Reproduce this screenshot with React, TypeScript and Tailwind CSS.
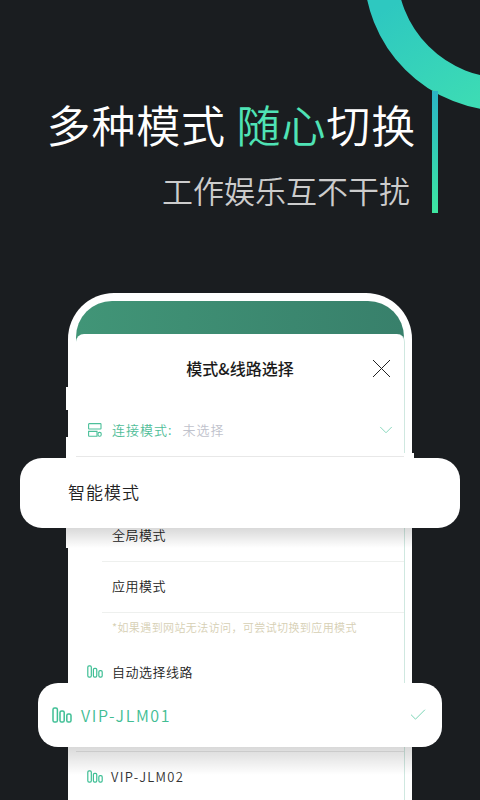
import { Check, ChevronDown } from 'lucide-react';

const font = "font-['Noto_Sans_CJK_SC','Noto_Sans',sans-serif]";

function LineIcon({ className }: { className: string }) {
  return (
    <svg viewBox="0 0 20 16" fill="none" stroke="currentColor" strokeWidth="1.5" className={className}>
      <rect x="1" y="1" width="4.4" height="14" rx="1.6" />
      <rect x="8" y="4" width="4.2" height="11" rx="1.6" />
      <rect x="14.8" y="7" width="4.2" height="8" rx="1.6" />
    </svg>
  );
}

function ModeIcon() {
  return (
    <svg viewBox="0 0 14 14" fill="none" stroke="currentColor" strokeWidth="1.1" className="h-[14px] w-[14px] text-[#4cc09a]">
      <rect x="0.6" y="0.6" width="12.4" height="5.4" rx="0.6" />
      <path d="M9 13.2H1.2a.6.6 0 0 1-.6-.6V8.4h8.4z" />
      <rect x="10" y="9.4" width="3.2" height="3.8" rx="1.4" />
    </svg>
  );
}

export default function App() {
  return (
    <div className={`relative h-[800px] w-[480px] overflow-hidden bg-[#1a1d20] ${font}`}>
      {/* corner ring */}
      <svg viewBox="0 0 480 120" className="absolute top-0 left-0 h-[120px] w-[480px]">
        <defs>
          <linearGradient id="ring" gradientUnits="userSpaceOnUse" x1="400" y1="0" x2="470" y2="110">
            <stop offset="0" stopColor="#2ec8c0" />
            <stop offset="1" stopColor="#3ddcb4" />
          </linearGradient>
        </defs>
        <circle cx="505" cy="-30" r="124.5" fill="none" stroke="url(#ring)" strokeWidth="33" />
      </svg>

      {/* heading */}
      <div className="relative flex justify-end pt-[91px] pr-[42px]">
        <div className="flex flex-col items-end">
          <h1 className="mt-[-2px] mr-[-1px] h-[70px] text-[44px] leading-[70px] font-[350] tracking-[0.85px] whitespace-pre text-white">
            多种模式 <span className="text-[#4fe3b5]">随心</span>切换
          </h1>
          <p className="mt-[8px] mr-[5px] text-[31px] leading-[46px] font-[350] text-[#cccccc]">工作娱乐互不干扰</p>
        </div>
        <div className="ml-[17px] h-[122px] w-[6px] bg-gradient-to-b from-[#2bb4c4] to-[#3ee6a0]" />
      </div>

      {/* phone */}
      <div className="mx-[68px] mt-[80px] h-[520px] rounded-t-[46px] bg-white px-[8px] pt-[8px]">
        <div className="h-[50px] rounded-t-[36px] bg-gradient-to-r from-[#419577] to-[#38806b]" />
        <div className="relative mt-[-17px] mr-[-1px] h-[470px] rounded-t-[8px] border-r border-[#cfe8e0] bg-white">
          <div className="flex h-[70px] items-center justify-center pb-[2px]">
            <span className="text-[16px] font-medium text-[#1b1b1b]">模式&amp;线路选择</span>
            <svg viewBox="0 0 19 19" fill="none" stroke="#222" strokeWidth="1" className="absolute top-[25px] right-[13px] h-[19px] w-[19px]">
              <path d="M1 1l17 17M18 1L1 18" />
            </svg>
          </div>
          <div className="flex h-[53px] items-center border-b border-[#e8e8e8] pr-[7px] pl-[12px] text-[13px] font-[350]">
            <ModeIcon />
            <span className="ml-[10px] tracking-[1px] text-[#4fbd98]">连接模式:</span>
            <span className="ml-[10px] tracking-[1px] text-[#c0c2cc]">未选择</span>
            <ChevronDown className="ml-auto h-[22px] w-[22px] text-[#7fd4b8]" strokeWidth={1} />
          </div>

          <div className="mt-[54px] ml-[26px] flex h-[51px] items-center border-b border-[#eef0ee] pb-[2px] pl-[10px] text-[13px] font-[350] tracking-[0.5px] text-[#222]">全局模式</div>
          <div className="ml-[26px] flex h-[51px] items-center border-b border-[#eef0ee] pb-[2px] pl-[10px] text-[13px] font-[350] tracking-[0.5px] text-[#222]">应用模式</div>
          <p className="mt-[5px] ml-[36px] text-[11px] leading-[18px] font-[350] tracking-[0.4px] text-[#d6cfb4]">*如果遇到网站无法访问，可尝试切换到应用模式</p>

          <div className="mt-[26px] flex items-center pl-[11px] text-[13px] font-[350] text-[#222]">
            <LineIcon className="h-[13px] w-[16px] text-[#3fbf95]" />
            <span className="ml-[9px] tracking-[0.5px]">自动选择线路</span>
          </div>

          <div className="mt-[69px] border-t border-[#e8e8e8] pt-[15px]">
            <div className="flex items-center pl-[11px] text-[13px] font-[350] text-[#333]">
              <LineIcon className="h-[13px] w-[16px] text-[#3fbf95]" />
              <span className="ml-[8px] tracking-[1.3px]">VIP-JLM02</span>
            </div>
          </div>
        </div>
      </div>

      <div className="absolute top-[387px] left-[66px] h-[23px] w-[2px] bg-white" />
      <div className="absolute top-[437px] left-[66px] h-[111px] w-[2px] bg-white" />
      <div className="absolute top-[453px] left-[404px] h-[5px] w-[10px] bg-white" />

      {/* card shadows, only visible on the phone */}
      <div className="absolute top-[528px] left-[66px] h-[20px] w-[346px] bg-gradient-to-b from-black/15 to-transparent" />
      <div className="absolute top-[747px] left-[68px] h-[28px] w-[344px] bg-gradient-to-b from-black/15 to-transparent" />

      {/* floating cards */}
      <div className="absolute top-[458px] left-[20px] flex h-[70px] w-[440px] items-center rounded-[22px] bg-white pb-[2px] pl-[48px] text-[17px] font-[350] tracking-[1px] text-[#222]">
        智能模式
      </div>
      <div className="absolute top-[683px] left-[38px] flex h-[64px] w-[404px] items-center rounded-[20px] bg-white pr-[14px] pl-[14px]">
        <LineIcon className="h-[16px] w-[20px] text-[#3fbf95]" />
        <span className="ml-[9px] text-[16px] font-[350] tracking-[1.6px] text-[#42bd94]">VIP-JLM01</span>
        <Check className="ml-auto h-[20px] w-[20px] text-[#5fcba6]" strokeWidth={1} />
      </div>
    </div>
  );
}
